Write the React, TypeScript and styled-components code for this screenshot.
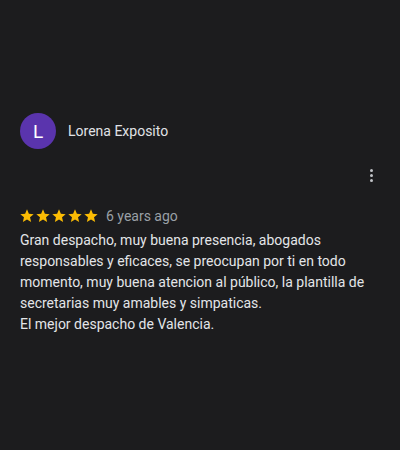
import styled, { createGlobalStyle } from "styled-components";

const Global = createGlobalStyle`
  html, body {
    margin: 0;
    padding: 0;
    background: #1c1c1e;
    font-family: Roboto, "Liberation Sans", sans-serif;
  }
`;

const Page = styled.div`
  width: 400px;
  height: 450px;
  box-sizing: border-box;
  padding: 113px 20px 0 20px;
  background: #1c1c1e;
`;

const Header = styled.div`
  display: flex;
  align-items: center;
  gap: 12px;
`;

const Avatar = styled.div`
  width: 36px;
  height: 36px;
  border-radius: 50%;
  background: #5a34ad;
  color: #fff;
  display: flex;
  align-items: center;
  justify-content: center;
  font-size: 19px;
`;

const Name = styled.span`
  color: #e0e2e6;
  font-size: 14px;
`;

const MenuRow = styled.div`
  display: flex;
  justify-content: flex-end;
  margin-top: 20px;
  padding-right: 7px;
`;

const Dots = styled.div`
  display: flex;
  flex-direction: column;
  gap: 2px;
  span {
    width: 3px;
    height: 3px;
    border-radius: 50%;
    background: #c0c2c6;
  }
`;

const RatingRow = styled.div`
  display: flex;
  align-items: center;
  margin-top: 26px;
  gap: 7px;
`;

const Stars = styled.div`
  display: flex;
  margin-left: -1px;
`;

const When = styled.span`
  color: #9aa0a6;
  font-size: 14px;
`;

const Body = styled.p`
  margin: 6px 0 0 0;
  color: #e3e5e8;
  font-size: 14px;
  line-height: 21px;
`;

const Star = () => (
  <svg width="16" height="16" viewBox="0 0 24 24">
    <path
      fill="#fbbc04"
      d="M12 17.27L18.18 21l-1.64-7.03L22 9.24l-7.19-.61L12 2 9.19 8.63 2 9.24l5.46 4.73L5.82 21z"
    />
  </svg>
);

export default function App() {
  return (
    <Page>
      <Global />
      <Header>
        <Avatar>L</Avatar>
        <Name>Lorena Exposito</Name>
      </Header>
      <MenuRow>
        <Dots>
          <span />
          <span />
          <span />
        </Dots>
      </MenuRow>
      <RatingRow>
        <Stars>
          {[0, 1, 2, 3, 4].map((i) => (
            <Star key={i} />
          ))}
        </Stars>
        <When>6 years ago</When>
      </RatingRow>
      <Body>
        Gran despacho, muy buena presencia, abogados responsables y eficaces,
        se preocupan por ti en todo momento, muy buena atencion al público, la
        plantilla de secretarias muy amables y simpaticas.
        <br />
        El mejor despacho de Valencia.
      </Body>
    </Page>
  );
}
